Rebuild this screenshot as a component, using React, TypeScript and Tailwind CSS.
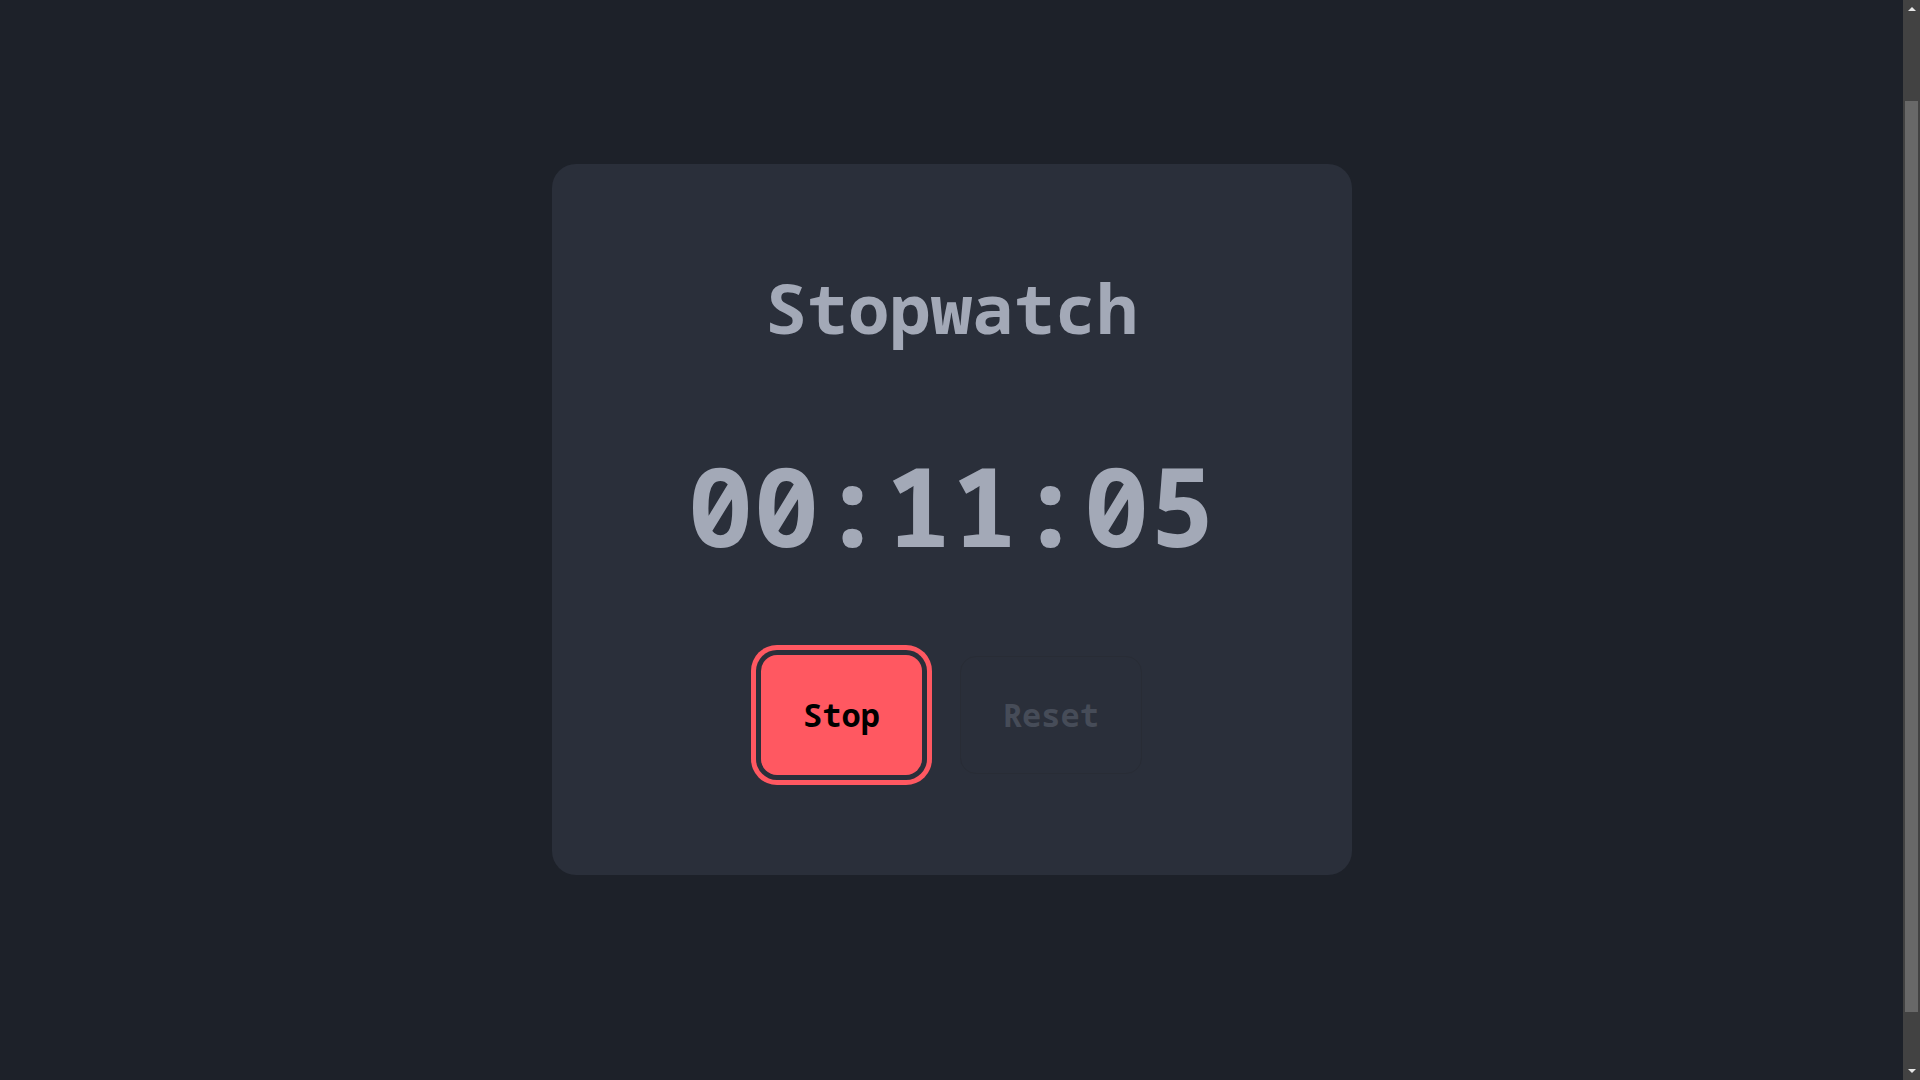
import { useState } from "react";

const mono = { fontFamily: '"Noto Sans Mono", "DejaVu Sans Mono", monospace' };

const pad = (n: number) => String(n).padStart(2, "0");

// window scrollbar as it shows in the capture
const ScrollBar = () => (
  <div className="flex h-full w-[17px] shrink-0 flex-col bg-[#424242]">
    <div className="flex h-[17px] items-center justify-center">
      <svg width="8" height="5" viewBox="0 0 8 5">
        <path d="M0 5 L4 1 L8 5 Z" fill="#e6e6e6" />
      </svg>
    </div>
    <div className="flex-1 px-[2px] pt-[84px] pb-[51px]">
      <div className="h-full bg-[#686868]" />
    </div>
    <div className="flex h-[17px] items-center justify-center">
      <svg width="8" height="5" viewBox="0 0 8 5">
        <path d="M0 0 L4 4 L8 0 Z" fill="#e6e6e6" />
      </svg>
    </div>
  </div>
);

export default function App() {
  const [seconds] = useState(11 * 60 + 5);
  const [running] = useState(true);

  const h = Math.floor(seconds / 3600);
  const m = Math.floor((seconds % 3600) / 60);
  const s = seconds % 60;

  return (
    <div className="flex h-screen overflow-hidden bg-[#1d2129]" style={mono}>
      <div className="flex flex-1 justify-center pt-[164px]">
        <div className="flex h-fit w-[800px] flex-col items-center rounded-3xl bg-[#2a2f3a] pt-[109px] pb-[100px]">
          {/* Title */}
          <h1 className="text-[69px] leading-none font-bold text-[#a3a9b7]">
            Stopwatch
          </h1>

          {/* Time */}
          <div className="mt-[107px] text-[110px] leading-none font-bold text-[#a3a9b7] slashed-zero">
            {pad(h)}:{pad(m)}:{pad(s)}
          </div>

          {/* Controls */}
          <div className="mt-[96px] flex items-center gap-[38px]">
            <button className="h-[120px] rounded-2xl bg-[#ff5861] px-[42px] text-[32px] leading-none font-bold text-black ring-[5px] ring-[#ff5861] ring-offset-[5px] ring-offset-[#2a2f3a]">
              {running ? "Stop" : "Start"}
            </button>
            <button
              disabled
              className="h-[118px] rounded-2xl border border-[#282c35] px-[42px] text-[32px] leading-none font-bold text-[#464c58]"
            >
              Reset
            </button>
          </div>
        </div>
      </div>
      <ScrollBar />
    </div>
  );
}
